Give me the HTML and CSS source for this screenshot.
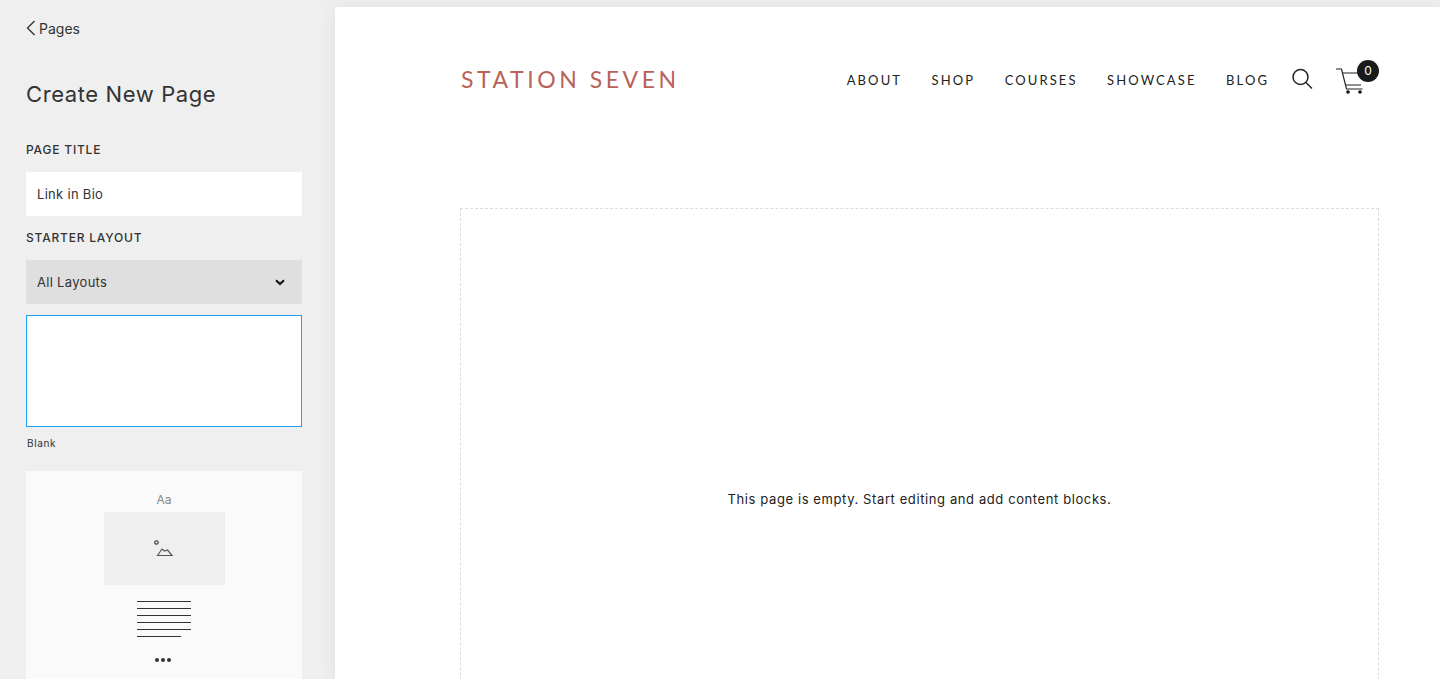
FILE: index.html
```html
<!DOCTYPE html>
<html lang="en">
<head>
  <meta charset="UTF-8">
  <meta name="viewport" content="width=device-width, initial-scale=1.0">
  <title>Create New Page</title>
  <link rel="stylesheet" href="styles.css">
</head>
<body>
  <div class="app">
    <aside class="sidebar">
      <a class="back-link" href="#">
        <svg class="back-icon" width="10" height="16" viewBox="0 0 10 16"><path d="M8.500 1 1.500 8l7 7" fill="none" stroke="#333" stroke-width="1.300"/></svg>
        Pages
      </a>
      <h1 class="panel-title">Create New Page</h1>

      <div class="field-label title-label">PAGE TITLE</div>
      <div class="text-field">Link in Bio</div>

      <div class="field-label layout-label">STARTER LAYOUT</div>
      <div class="select-field">
        <span>All Layouts</span>
        <svg width="10" height="7" viewBox="0 0 10 7"><path d="M1 1.200 5 5l4-3.800" fill="none" stroke="#111" stroke-width="2"/></svg>
      </div>

      <div class="layout-blank"></div>
      <div class="layout-name">Blank</div>

      <div class="layout-card">
        <div class="thumb-heading">Aa</div>
        <div class="thumb-image">
          <svg width="20" height="17" viewBox="0 0 20 17">
            <circle cx="2.500" cy="2.500" r="1.700" fill="none" stroke="#444" stroke-width="1.200"/>
            <path d="M3.500 15.500 8 9l2.500 2 3-1 4.500 5.500Z" fill="none" stroke="#555" stroke-width="1.200"/>
          </svg>
        </div>
        <div class="thumb-lines">
          <span></span><span></span><span></span><span></span><span></span><span class="short"></span>
        </div>
        <div class="thumb-dots"><i></i><i></i><i></i></div>
      </div>
    </aside>

    <main class="preview">
      <header class="site-header">
        <div class="logo">STATION SEVEN</div>
        <nav class="site-nav">
          <a href="#">ABOUT</a>
          <a href="#">SHOP</a>
          <a href="#">COURSES</a>
          <a href="#">SHOWCASE</a>
          <a href="#">BLOG</a>
          <svg class="search-icon" width="22" height="22" viewBox="0 0 22 22">
            <circle cx="9.500" cy="9" r="7.500" fill="none" stroke="#222" stroke-width="1.500"/>
            <path d="m15 14.500 6 6" stroke="#222" stroke-width="1.500"/>
          </svg>
          <div class="cart">
            <svg width="30" height="28" viewBox="0 0 30 28">
              <path d="M0 3h5.500l5 20h16" fill="none" stroke="#222" stroke-width="1.200"/>
              <path d="M6.500 7H26M9.500 19H25" fill="none" stroke="#222" stroke-width="1.200"/>
              <circle cx="12" cy="26" r="1.800" fill="#111"/>
              <circle cx="24" cy="26" r="1.800" fill="#111"/>
            </svg>
            <span class="cart-count">0</span>
          </div>
        </nav>
      </header>
      <section class="empty-page">
        <p>This page is empty. Start editing and add content blocks.</p>
      </section>
    </main>
  </div>
</body>
</html>
```

FILE: styles.css
```css
html, body {
  height: 100%;
}

body {
  margin: 0;
  overflow: hidden;
  background: #efefef;
  font-family: Inter, "Noto Sans", sans-serif;
  color: #333;
}

.app {
  display: flex;
  height: 100vh;
  overflow: hidden;
}

/* left panel */
.sidebar {
  width: 276px;
  flex-shrink: 0;
  padding: 0 33px 0 26px;
  overflow: hidden;
}

.back-link {
  display: flex;
  align-items: center;
  gap: 3px;
  height: 16px;
  margin-top: 20px;
  font-size: 14px;
  color: #333;
  text-decoration: none;
}

.panel-title {
  margin: 40px 0 0;
  height: 36px;
  line-height: 36px;
  font-size: 22px;
  font-weight: 400;
  letter-spacing: 0.6px;
}

.field-label {
  height: 16px;
  line-height: 16px;
  font-size: 12px;
  font-weight: 500;
  letter-spacing: 0.8px;
}

.title-label {
  margin-top: 30px;
}

.layout-label {
  margin-top: 14px;
}

.text-field,
.select-field {
  height: 44px;
  padding: 0 11px;
  box-sizing: border-box;
  display: flex;
  align-items: center;
  font-size: 13px;
  letter-spacing: 0.3px;
  margin-top: 14px;
}

.text-field {
  background: #fff;
}

.select-field {
  background: #dfdfdf;
  justify-content: space-between;
  padding-right: 17px;
}

.layout-blank {
  height: 110px;
  margin-top: 11px;
  background: #fff;
  border: 1px solid #1aa3f5;
}

.layout-name {
  margin-top: 9px;
  padding-left: 1px;
  height: 14px;
  line-height: 14px;
  font-size: 10px;
  letter-spacing: 0.6px;
}

.layout-card {
  margin-top: 21px;
  height: 260px;
  background: #fafafa;
  display: flex;
  flex-direction: column;
  align-items: center;
}

.thumb-heading {
  margin-top: 22px;
  height: 14px;
  line-height: 14px;
  font-size: 12px;
  color: #888;
}

.thumb-image {
  width: 121px;
  height: 73px;
  margin-top: 5px;
  background: #efefef;
  display: flex;
  align-items: center;
  justify-content: center;
}

.thumb-lines {
  width: 54px;
  margin-top: 16px;
  display: flex;
  flex-direction: column;
  gap: 6px;
  margin-left: -1px;
}

.thumb-lines span {
  display: block;
  height: 1px;
  background: #333;
}

.thumb-lines .short {
  width: 44px;
}

.thumb-dots {
  margin-top: 21px;
  display: flex;
  gap: 2px;
  margin-left: -3px;
}

.thumb-dots i {
  width: 4px;
  height: 4px;
  border-radius: 50%;
  background: #333;
}

/* site preview */
.preview {
  flex: 1;
  margin-top: 7px;
  padding: 0 61px 0 125px;
  background: #fff;
  box-shadow: 0 0 18px rgba(0, 0, 0, 0.07);
}

.site-header {
  display: flex;
  justify-content: space-between;
  align-items: center;
  height: 201px;
  padding-bottom: 56px;
  box-sizing: border-box;
}

.logo {
  font-family: Lato, sans-serif;
  font-size: 23px;
  letter-spacing: 3.55px;
  color: #b9625a;
  padding-left: 1px;
  margin-top: -1px;
}

.site-nav {
  display: flex;
  align-items: center;
  gap: 29.5px;
}

.site-nav a {
  font-family: Lato, sans-serif;
  font-size: 13px;
  letter-spacing: 2.1px;
  color: #222;
  text-decoration: none;
}

.search-icon {
  margin-left: -7.5px;
  margin-top: -2px;
}

.cart {
  position: relative;
  width: 43px;
  height: 28px;
  margin-left: -6.5px;
}

.cart-count {
  position: absolute;
  top: -6px;
  right: 0;
  width: 22px;
  height: 22px;
  border-radius: 50%;
  background: #1a1a1a;
  color: #fff;
  font-size: 12px;
  line-height: 22px;
  text-align: center;
}

.empty-page {
  height: 582px;
  box-sizing: border-box;
  border: 1px dashed #ddd;
  display: flex;
  align-items: center;
  justify-content: center;
}

.empty-page p {
  margin: 0;
  font-size: 13px;
  letter-spacing: 0.6px;
  color: #222;
}
```
